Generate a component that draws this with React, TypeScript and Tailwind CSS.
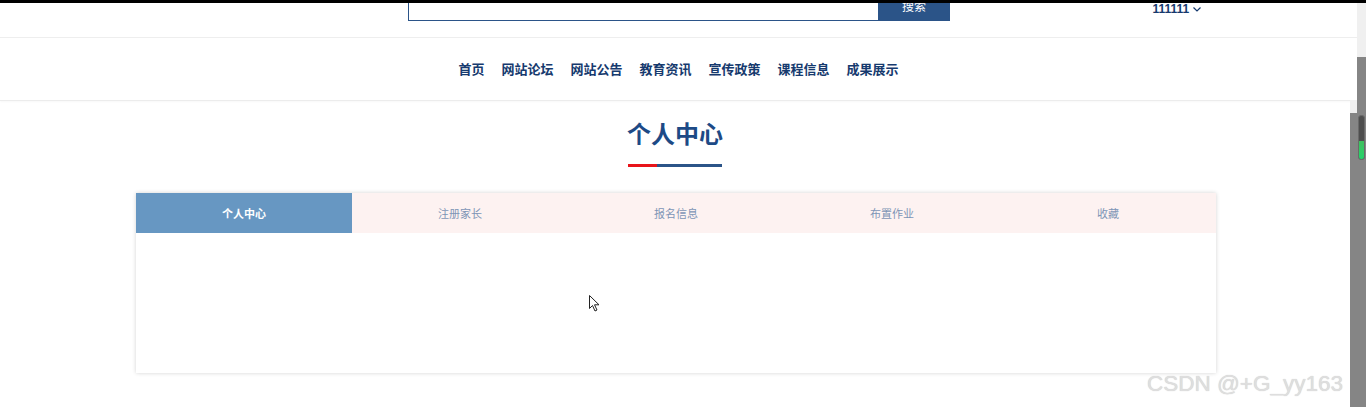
import React from 'react';

const navItems = ['首页', '网站论坛', '网站公告', '教育资讯', '宣传政策', '课程信息', '成果展示'];
const tabs = ['个人中心', '注册家长', '报名信息', '布置作业', '收藏'];

const font = "font-['Microsoft_YaHei','Noto_Sans_CJK_SC',sans-serif]";

const App: React.FC = () => {
  return (
    <div className={`relative h-[407px] w-[1366px] overflow-hidden bg-white ${font}`}>
      <div className="h-[3px] bg-black" />
      <div className="flex h-[404px]">
        <div className="flex flex-1 flex-col">
          {/* header */}
          <div className="grid h-[35px] grid-cols-[1fr_auto_1fr] overflow-hidden border-b border-[#eeeeee]">
            <div />
            <div className="-mt-[12px] flex h-[30px]">
              <div className="h-full w-[471px] border border-[#2b5488] bg-white" />
              <button className="flex h-full w-[71px] items-center justify-center bg-[#2b5488] text-[12px] text-white">搜索</button>
            </div>
            <div className="flex items-start pl-[203px]">
              <span className="-mt-[3px] flex items-center gap-[3px] text-[12px] font-bold text-[#163a6e] font-['Liberation_Sans',sans-serif]">
                111111
                <svg width="10" height="10" viewBox="0 0 10 10" fill="none" stroke="#163a6e" strokeWidth="1.2">
                  <path d="M1.5 3.5 L5 7 L8.5 3.5" />
                </svg>
              </span>
            </div>
          </div>
          {/* nav */}
          <nav className="flex h-[63px] items-center justify-center gap-[17px] border-b border-[#ececec] shadow-[0_1px_2px_rgba(0,0,0,0.03)]">
            {navItems.map((item) => (
              <a key={item} className="text-[13px] font-bold text-[#163a6e]">{item}</a>
            ))}
          </nav>
          {/* title */}
          <div className="ml-[136px] flex w-[1078px] flex-col items-center">
            <h1 className="mt-[16px] text-[24px] font-bold leading-[32px] text-[#1d4a86]">个人中心</h1>
            <div className="mt-[15px] flex h-[3px] w-[94px]">
              <div className="w-[29px] bg-[#e8141a]" />
              <div className="flex-1 bg-[#2b5488]" />
            </div>
          </div>
          {/* card */}
          <div className="ml-[136px] mt-[26px] w-[1080px] bg-white shadow-[0_0_4px_rgba(0,0,0,0.18)]">
            <div className="grid h-[40px] grid-cols-5 bg-[#fdf2f1]">
              {tabs.map((t, i) => (
                <div
                  key={t}
                  className={
                    i === 0
                      ? 'flex items-center justify-center bg-[#6797c2] text-[11px] font-bold text-white'
                      : 'flex items-center justify-center text-[11px] text-[#7d95b6]'
                  }
                >
                  {t}
                </div>
              ))}
            </div>
            <div className="h-[140px]" />
          </div>
        </div>
        {/* scrollbar */}
        <div className="flex w-[9px] flex-col">
          <div className="h-[54px] bg-[#f0f0f0]" />
          <div className="flex-1 bg-[#858585] px-[1px] pt-[58px]">
            <div className="flex h-[45px] w-[7px] flex-col overflow-hidden rounded-[3px] border border-[#6a6a6a] bg-[#4e4e4e]">
              <div className="flex-1" />
              <div className="h-[18px] bg-gradient-to-b from-[#3fbf5f] to-[#22d36a]" />
            </div>
          </div>
        </div>
      </div>
      {/* scrollbar shoulder */}
      <div className="absolute right-[9px] top-[100px] flex h-[307px] w-[7px] flex-col">
        <div className="h-[13px] bg-[#f0f0f0]" />
        <div className="flex-1 bg-[#858585]" />
      </div>
      {/* mouse cursor */}
      <svg className="absolute left-[589px] top-[295px]" width="12" height="17" viewBox="0 0 12 17">
        <path d="M0.5 0.5 L0.5 13.5 L3.5 10.5 L6 16 L8 15 L5.5 9.8 L10 9.8 Z" fill="#ffffff" stroke="#222222" strokeWidth="1" strokeLinejoin="round" />
      </svg>
      {/* watermark */}
      <div className="absolute left-[1147px] top-[369px] whitespace-nowrap text-[22.5px] leading-[30px] text-[#dedede] font-['Liberation_Sans',sans-serif] [text-shadow:0_0_1px_rgba(0,0,0,0.22)]">
        CSDN @+G_yy163
      </div>
    </div>
  );
};

export default App;
